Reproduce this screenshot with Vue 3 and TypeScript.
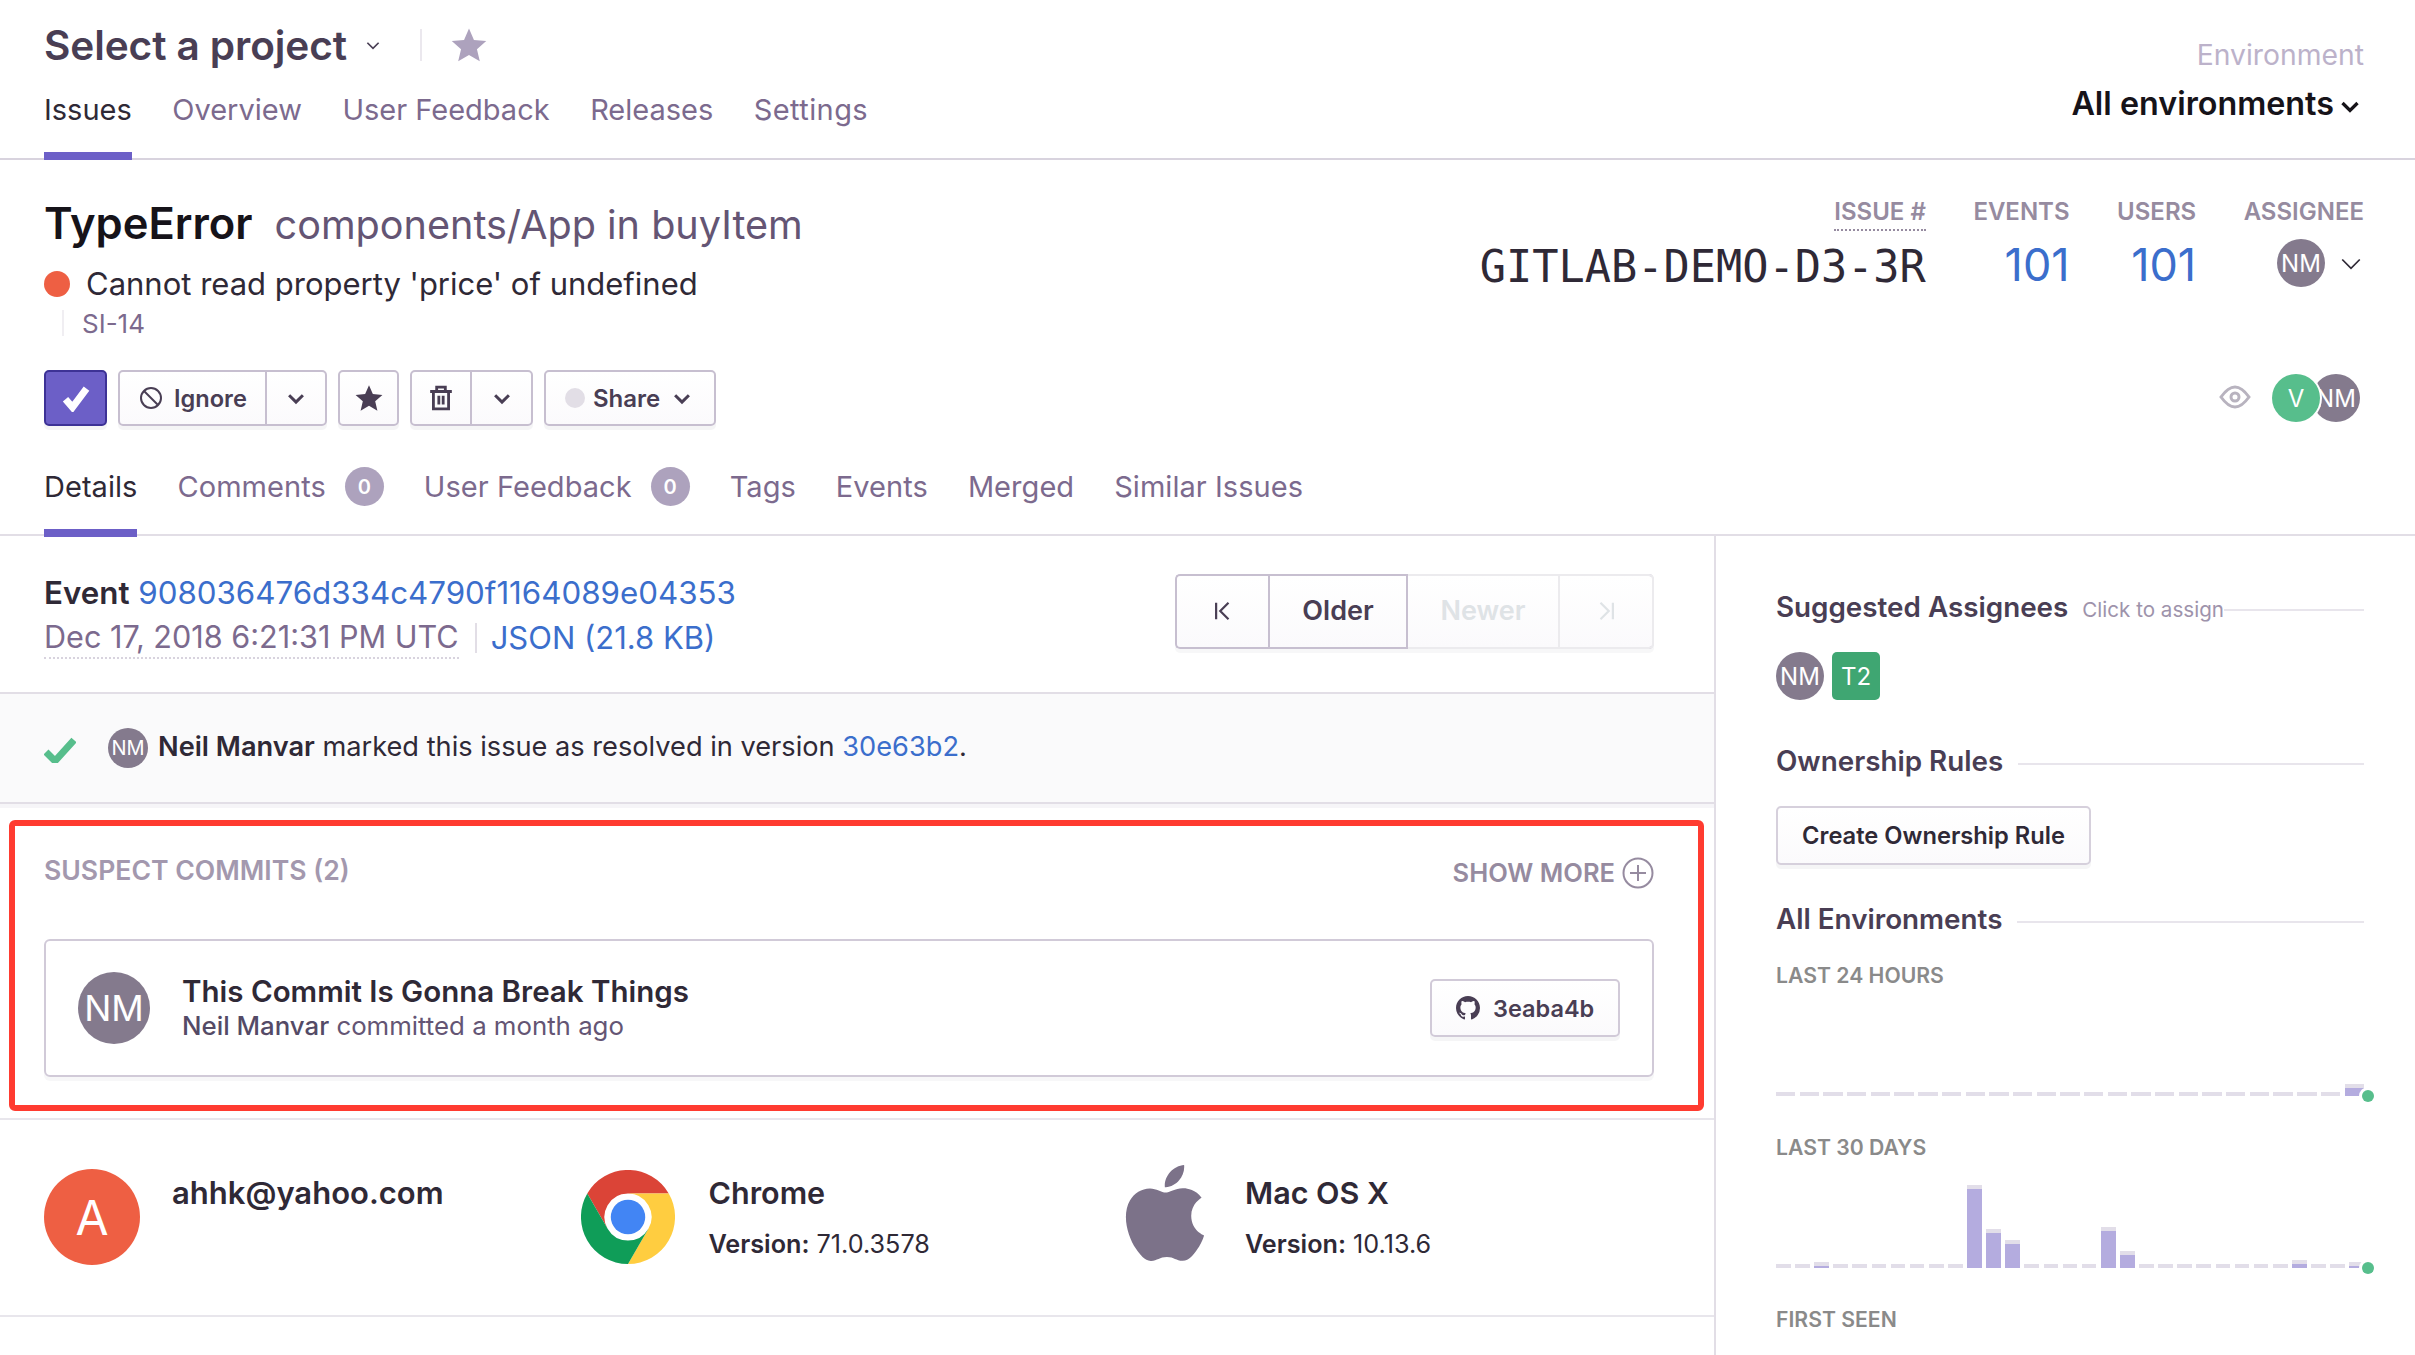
<script setup lang="ts">
const navTabs: string[] = ['Overview', 'User Feedback', 'Releases', 'Settings']
const stats = [
  { label: 'EVENTS', value: '101' },
  { label: 'USERS', value: '101' },
]
const bars24: number[] = [...Array(24).fill(4), 12]
const bars30: number[] = Array(31).fill(4)
const peaks: Record<number, number> = { 2: 6, 10: 83, 11: 39, 12: 28, 17: 41, 18: 17, 27: 8, 30: 6 }
Object.keys(peaks).forEach((k) => { bars30[Number(k)] = peaks[Number(k)] })
const chevron = 'M3 6l5 5 5-5'
</script>

<template>
  <div class="page">
    <header class="top">
      <div class="top-left">
        <div class="proj">
          <span class="proj-name">Select a project</span>
          <svg class="proj-chev" viewBox="0 0 16 16"><path :d="chevron" /></svg>
          <span class="proj-div"></span>
          <svg class="proj-star" viewBox="0 0 24 24"><path d="M12 1l3.3 7.6 8.2.8-6.2 5.4 1.9 8.1-7.2-4.3-7.2 4.3 1.9-8.1L.5 9.4l8.2-.8z" /></svg>
        </div>
        <nav class="nav">
          <a class="nav-tab active">Issues</a>
          <a v-for="t in navTabs" :key="t" class="nav-tab">{{ t }}</a>
        </nav>
      </div>
      <div class="env">
        <div class="env-label">Environment</div>
        <div class="env-value">All environments<svg class="env-chev" viewBox="0 0 16 16"><path :d="chevron" /></svg></div>
      </div>
    </header>

    <section class="issue">
      <div class="issue-top">
        <div class="issue-info">
          <div class="issue-title"><span class="err">TypeError</span><span class="loc">components/App in buyItem</span></div>
          <div class="issue-msg"><span class="dot"></span>Cannot read property 'price' of undefined</div>
          <div class="issue-short"><span>SI-14</span></div>
        </div>
        <div class="stats">
          <div class="stat">
            <div class="stat-label dotted">ISSUE #</div>
            <div class="short-id">GITLAB-DEMO-D3-3R</div>
          </div>
          <div v-for="s in stats" :key="s.label" class="stat">
            <div class="stat-label">{{ s.label }}</div>
            <div class="stat-num">{{ s.value }}</div>
          </div>
          <div class="stat">
            <div class="stat-label">ASSIGNEE</div>
            <div class="assignee">
              <span class="ava ava48">NM</span>
              <svg class="thin-chev" viewBox="0 0 16 16"><path :d="chevron" /></svg>
            </div>
          </div>
        </div>
      </div>

      <div class="actions">
        <div class="btn-row">
          <button class="btn primary"><svg viewBox="0 0 24 24" class="ic-check"><path d="M3 13l6 7L21 4" /></svg></button>
          <div class="btn group ignore">
            <span class="seg seg-ignore">
              <svg class="ic-ban" viewBox="0 0 24 24"><circle cx="12" cy="12" r="10" /><path d="M5 5l14 14" /></svg>Ignore
            </span>
            <span class="seg seg-chev"><svg class="btn-chev" viewBox="0 0 16 16"><path :d="chevron" /></svg></span>
          </div>
          <button class="btn star-btn"><svg viewBox="0 0 24 24" class="ic-star"><path d="M12 1l3.3 7.6 8.2.8-6.2 5.4 1.9 8.1-7.2-4.3-7.2 4.3 1.9-8.1L.5 9.4l8.2-.8z" /></svg></button>
          <div class="btn group del">
            <span class="seg seg-trash">
              <svg class="ic-trash" viewBox="0 0 24 24"><path d="M2 6h20M8 6V2h8v4M5 6v16h14V6M10 10v8M14 10v8" /></svg>
            </span>
            <span class="seg seg-chev"><svg class="btn-chev" viewBox="0 0 16 16"><path :d="chevron" /></svg></span>
          </div>
          <button class="btn share"><span class="share-dot"></span>Share<svg class="btn-chev" viewBox="0 0 16 16"><path :d="chevron" /></svg></button>
        </div>
        <div class="watch">
          <svg class="ic-eye" viewBox="0 0 32 24"><path d="M2 12C7 5 11 2 16 2s9 3 14 10c-5 7-9 10-14 10S7 19 2 12z" /><circle cx="16" cy="12" r="4" /></svg>
          <div class="stack">
            <span class="ava ava48 green">V</span>
            <span class="ava ava48 behind">NM</span>
          </div>
        </div>
      </div>

      <nav class="subnav">
        <a class="sub-tab active">Details</a>
        <a class="sub-tab">Comments<span class="badge">0</span></a>
        <a class="sub-tab">User Feedback<span class="badge">0</span></a>
        <a class="sub-tab">Tags</a>
        <a class="sub-tab">Events</a>
        <a class="sub-tab">Merged</a>
        <a class="sub-tab">Similar Issues</a>
      </nav>
    </section>

    <div class="body">
      <main class="main">
        <section class="event">
          <div>
            <div class="event-line"><b>Event</b> <a class="link">908036476d334c4790f1164089e04353</a></div>
            <div class="event-line second"><span class="date">Dec 17, 2018 6:21:31 PM UTC</span><span class="sep"></span><a class="link">JSON (21.8 KB)</a></div>
          </div>
          <div class="pager">
            <span class="pg pg-first"><svg viewBox="0 0 16 16" class="pg-ic"><path d="M3 2v12M12 2L6 8l6 6" /></svg></span>
            <span class="pg pg-older">Older</span>
            <span class="pg pg-newer off">Newer</span>
            <span class="pg pg-last off"><svg viewBox="0 0 16 16" class="pg-ic"><path d="M13 2v12M4 2l6 6-6 6" /></svg></span>
          </div>
        </section>

        <section class="activity">
          <svg class="res-check" viewBox="0 0 32 26"><path d="M2 15l9 9L30 3" /></svg>
          <span class="ava ava40">NM</span>
          <span class="act-text"><b>Neil Manvar</b> marked this issue as resolved in version <a class="link">30e63b2</a>.</span>
        </section>

        <section class="suspect">
          <div class="mark"></div>
          <div class="suspect-head">
            <span class="caps">SUSPECT COMMITS (2)</span>
            <span class="caps more">SHOW MORE<svg class="plus" viewBox="0 0 32 32"><circle cx="16" cy="16" r="14.5" /><path d="M16 8v16M8 16h16" /></svg></span>
          </div>
          <div class="commit">
            <span class="ava ava72">NM</span>
            <div class="commit-text">
              <div class="commit-title">This Commit Is Gonna Break Things</div>
              <div class="commit-sub"><b>Neil Manvar</b> committed a month ago</div>
            </div>
            <button class="btn sha">
              <svg class="ic-gh" viewBox="0 0 16 16"><path d="M8 0C3.58 0 0 3.58 0 8c0 3.54 2.29 6.53 5.47 7.59.4.07.55-.17.55-.38 0-.19-.01-.82-.01-1.49-2.01.37-2.53-.49-2.69-.94-.09-.23-.48-.94-.82-1.13-.28-.15-.68-.52-.01-.53.63-.01 1.08.58 1.23.82.72 1.21 1.87.87 2.33.66.07-.52.28-.87.51-1.07-1.78-.2-3.64-.89-3.64-3.95 0-.87.31-1.59.82-2.15-.08-.2-.36-1.02.08-2.12 0 0 .67-.21 2.2.82.64-.18 1.32-.27 2-.27.68 0 1.36.09 2 .27 1.53-1.04 2.2-.82 2.2-.82.44 1.1.16 1.92.08 2.12.51.56.82 1.27.82 2.15 0 3.07-1.87 3.75-3.65 3.95.29.25.54.73.54 1.48 0 1.07-.01 1.93-.01 2.2 0 .21.15.46.55.38A8.013 8.013 0 0016 8c0-4.42-3.58-8-8-8z" /></svg>3eaba4b
            </button>
          </div>
        </section>

        <section class="devices">
          <div class="device">
            <span class="ava ava96 red">A</span>
            <div class="dev-name">ahhk@yahoo.com</div>
          </div>
          <div class="device">
            <span class="dev-box">
              <svg class="chrome" viewBox="0 0 48 48">
                <path fill="#db4437" d="M3.2 12A24 24 0 0 1 44.8 12H24A12 12 0 0 0 13.6 30Z" />
                <path fill="#ffcd40" d="M44.8 12A24 24 0 0 1 24 48L34.4 30A12 12 0 0 0 24 12Z" />
                <path fill="#0f9d58" d="M24 48A24 24 0 0 1 3.2 12L13.6 30A12 12 0 0 0 34.4 30Z" />
                <circle cx="24" cy="24" r="11" fill="#fff" />
                <circle cx="24" cy="24" r="8.8" fill="#4285f4" />
              </svg>
            </span>
            <div><div class="dev-name">Chrome</div><div class="dev-ver"><b>Version:</b> 71.0.3578</div></div>
          </div>
          <div class="device">
            <span class="dev-box">
              <svg class="apple" viewBox="0 0 24 24"><path d="M12.152 6.896c-.948 0-2.415-1.078-3.96-1.04-2.04.027-3.91 1.183-4.961 3.014-2.117 3.675-.546 9.103 1.519 12.09 1.013 1.454 2.208 3.09 3.792 3.039 1.52-.065 2.09-.987 3.935-.987 1.831 0 2.35.987 3.96.948 1.637-.026 2.676-1.48 3.676-2.948 1.156-1.688 1.636-3.325 1.662-3.415-.039-.013-3.182-1.221-3.22-4.857-.026-3.04 2.48-4.494 2.597-4.559-1.429-2.09-3.623-2.324-4.39-2.376-2-.156-3.675 1.09-4.61 1.09zM15.53 3.83c.843-1.012 1.4-2.427 1.245-3.83-1.207.052-2.662.805-3.532 1.818-.78.896-1.454 2.338-1.273 3.714 1.338.104 2.715-.688 3.559-1.701" /></svg>
            </span>
            <div><div class="dev-name">Mac OS X</div><div class="dev-ver"><b>Version:</b> 10.13.6</div></div>
          </div>
        </section>
      </main>

      <aside class="side">
        <div class="side-head"><span class="side-title">Suggested Assignees</span><small class="hint">Click to assign</small><i class="rule tight"></i></div>
        <div class="suggest">
          <span class="ava ava48">NM</span>
          <span class="team">T2</span>
        </div>
        <div class="side-head own"><span class="side-title">Ownership Rules</span><i class="rule"></i></div>
        <button class="btn create">Create Ownership Rule</button>
        <div class="side-head envs"><span class="side-title">All Environments</span><i class="rule"></i></div>
        <div class="side-label first">LAST 24 HOURS</div>
        <div class="chart c24">
          <span v-for="(h, i) in bars24" :key="i" class="bar" :style="{ height: h + 'px' }"></span>
          <span class="pulse"></span>
        </div>
        <div class="side-label">LAST 30 DAYS</div>
        <div class="chart c30">
          <span v-for="(h, i) in bars30" :key="i" class="bar" :style="{ height: h + 'px' }"></span>
          <span class="pulse"></span>
        </div>
        <div class="side-label">FIRST SEEN</div>
      </aside>
    </div>
  </div>
</template>

<style scoped>
.page { width: 2415px; height: 1355px; overflow: hidden; background: #fff; color: #2f2936; font-family: Inter, "Noto Sans", sans-serif; position: relative; }
b { font-weight: 600; }
a { text-decoration: none; }
svg { display: block; flex: none; }
.link { color: #3b6ecc; }

.top { display: flex; justify-content: space-between; height: 160px; box-sizing: border-box; border-bottom: 2px solid #d8d3de; padding: 0 51px 0 44px; }
.proj { display: flex; align-items: center; height: 44px; margin-top: 23px; }
.proj-name { font-size: 40.6px; font-weight: 600; color: #493e54; letter-spacing: -.1px; }
.proj-chev { width: 18px; height: 18px; margin-left: 17px; fill: none; stroke: #493e54; stroke-width: 1.5; }
.proj-div { width: 2px; height: 32px; background: #ebe8ee; margin-left: 38px; }
.proj-star { width: 36px; height: 36px; margin-left: 29px; fill: #ada2bd; }
.nav { display: flex; gap: 40.5px; margin-top: 22px; }
.nav-tab { font-size: 29px; line-height: 42px; height: 71px; color: #7c6a8e; box-sizing: border-box; border-bottom: 8px solid transparent; }
.nav-tab:last-child { letter-spacing: .4px; }
.nav-tab.active { color: #2f2936; border-color: #6c5fc7; }

.env { display: flex; flex-direction: column; align-items: flex-end; padding-top: 37px; }
.env-label { font-size: 28.3px; line-height: 36px; color: #bcb2ca; }
.env-value { display: flex; align-items: center; font-size: 32.3px; line-height: 42px; font-weight: 600; color: #161319; margin-top: 10px; }
.env-chev { width: 24px; height: 24px; margin: 4px 2px 0 4px; fill: none; stroke: #161319; stroke-width: 2.2; }

.issue { height: 376px; box-sizing: border-box; border-bottom: 2px solid #e2dee6; padding: 0 51px 0 44px; }
.issue-top { display: flex; justify-content: space-between; height: 190px; }
.issue-info { padding-top: 39px; }
.issue-title { display: flex; align-items: baseline; line-height: 48px; }
.err { font-size: 43.5px; font-weight: 600; color: #161319; }
.loc { font-size: 39.6px; color: #645574; margin-left: 22px; }
.issue-msg { display: flex; align-items: center; gap: 16px; font-size: 31px; line-height: 40px; color: #2f2936; margin-top: 15px; }
.dot { width: 26px; height: 26px; border-radius: 50%; background: #ee5f43; }
.issue-short { border-left: 2px solid #f0eef2; margin: 6px 0 0 18px; padding-left: 18px; height: 26px; display: flex; align-items: center; font-size: 26px; color: #7c6a8e; }

.stats { display: flex; gap: 47.5px; padding-top: 35px; }
.stat { display: flex; flex-direction: column; align-items: flex-end; }
.stat-label { font-size: 24px; line-height: 34px; font-weight: 600; color: #968ba0; height: 34px; }
.dotted { border-bottom: 2px dotted #968ba0; }
.short-id { font-family: "DejaVu Sans Mono", monospace; font-size: 43.6px; line-height: 56px; margin-top: 8px; color: #2f2936; }
.stat-num { font-size: 45px; line-height: 56px; margin-top: 8px; color: #3b6ecc; }
.assignee { display: flex; align-items: center; gap: 12px; margin-top: 10px; }
.thin-chev { width: 28px; height: 28px; fill: none; stroke: #2f2936; stroke-width: 1; margin-right: -1px; }

.ava { display: inline-flex; align-items: center; justify-content: center; border-radius: 50%; background: #847a8d; color: #fff; flex: none; }
.ava48 { width: 48px; height: 48px; font-size: 24px; }
.ava40 { width: 40px; height: 40px; font-size: 20px; }
.ava72 { width: 72px; height: 72px; font-size: 36px; }
.ava96 { width: 96px; height: 96px; font-size: 48px; }
.red { background: #ee5f43; }
.green { background: #57be8c; }

.actions { display: flex; justify-content: space-between; align-items: flex-start; margin-top: 20px; height: 60px; }
.btn-row { display: flex; gap: 11px; }
.btn { display: inline-flex; align-items: center; box-sizing: border-box; height: 56px; padding: 0; background: linear-gradient(#fff, #fbfafc); border: 2px solid #c7bfd0; border-radius: 5px; box-shadow: 0 4px 0 rgba(60, 50, 80, .05); color: #493e54; font-family: inherit; font-size: 24px; font-weight: 600; }
.primary { width: 63px; justify-content: center; background: #6c5fc7; border-color: #3d3296; }
.ic-check { width: 28px; height: 28px; fill: none; stroke: #fff; stroke-width: 6; }
.seg { display: flex; align-items: center; height: 100%; box-sizing: border-box; }
.seg-ignore { width: 147px; padding-left: 19px; gap: 11px; border-right: 2px solid #c7bfd0; font-size: 23.6px; }
.seg-chev { flex: 1; justify-content: center; }
.ignore { width: 209px; }
.ic-ban { width: 24px; height: 24px; fill: none; stroke: #493e54; stroke-width: 2; }
.btn-chev { width: 22px; height: 22px; fill: none; stroke: #493e54; stroke-width: 2.2; }
.star-btn { width: 61px; justify-content: center; }
.ic-star { width: 28px; height: 28px; fill: #493e54; }
.del { width: 123px; }
.seg-trash { width: 60px; justify-content: center; border-right: 2px solid #c7bfd0; }
.ic-trash { width: 26px; height: 26px; fill: none; stroke: #493e54; stroke-width: 2.6; }
.share { width: 172px; padding-left: 19px; }
.share-dot { width: 20px; height: 20px; border-radius: 50%; background: #e2dee6; margin-right: 8px; }
.share .btn-chev { margin-left: 11px; }

.watch { display: flex; align-items: center; gap: 21px; margin-top: 4px; margin-right: 4px; }
.ic-eye { width: 32px; height: 24px; fill: none; stroke: #b8b3bf; stroke-width: 3; margin-top: -3px; }
.stack { display: flex; }
.stack .green { position: relative; z-index: 1; box-shadow: 0 0 0 2px #fff; }
.behind { margin-left: -8px; }

.subnav { display: flex; gap: 40px; margin-top: 37px; height: 70px; }
.sub-tab { display: flex; align-items: flex-start; gap: 19px; height: 70px; box-sizing: border-box; font-size: 29px; line-height: 40px; letter-spacing: .05px; color: #7c6a8e; border-bottom: 8px solid transparent; }
.sub-tab.active { color: #2f2936; border-color: #6c5fc7; }
.badge { width: 39px; height: 39px; border-radius: 50%; background: #ada2bd; color: #fff; font-size: 20px; font-weight: 600; display: flex; align-items: center; justify-content: center; }

.body { display: flex; height: 819px; }
.main { width: 1716px; box-sizing: border-box; border-right: 2px solid #e2dee6; flex: none; }
.event { display: flex; justify-content: space-between; height: 158px; box-sizing: border-box; padding: 37px 60px 0 44px; border-bottom: 2px solid #e2dee6; }
.event-line { font-size: 31.3px; line-height: 40px; color: #2f2936; }
.second { display: flex; align-items: center; margin-top: 4px; font-size: 31px; }
.date { color: #7c6a8e; border-bottom: 2px dotted #d8d3de; line-height: 40px; font-size: 30.6px; }
.sep { width: 2px; height: 30px; background: #e2dee6; margin: 0 14px 0 16px; }

.pager { display: flex; height: 75px; box-sizing: border-box; border: 2px solid #c7bfd0; border-right-color: #ecebee; border-radius: 5px; background: linear-gradient(#fff, #fbfafc); box-shadow: 0 4px 0 rgba(60, 50, 80, .04); margin-top: 1px; position: relative; }
.pg { display: flex; align-items: center; justify-content: center; font-size: 27px; font-weight: 600; color: #493e54; box-sizing: border-box; padding-bottom: 2px; }
.pg-first { width: 93px; border-right: 2px solid #c7bfd0; }
.pg-older { width: 138px; border-right: 2px solid #c7bfd0; }
.pg-newer { width: 152px; border-right: 2px solid #ecebee; }
.pg-last { width: 92px; }
.off { color: #dfe3e6; }
.pg-ic { width: 22px; height: 22px; fill: none; stroke: #493e54; stroke-width: 1.6; }
.off .pg-ic { stroke: #dfe3e6; }
.pager::after { content: ""; position: absolute; left: 231px; right: -2px; top: -2px; bottom: -2px; border: 2px solid #ecebee; border-left: 0; border-radius: 0 5px 5px 0; }

.activity { display: flex; align-items: center; height: 110px; box-sizing: border-box; background: #fafafb; border-bottom: 2px solid #e2dee6; box-shadow: 0 4px 0 #f6f5f8; padding-left: 44px; position: relative; }
.res-check { width: 32px; height: 26px; fill: none; stroke: #57be8c; stroke-width: 7; margin-top: 4px; }
.activity .ava { margin-left: 32px; }
.act-text { font-size: 27.2px; margin-left: 10px; margin-top: -4px; color: #2f2936; }

.suspect { height: 316px; box-sizing: border-box; border-bottom: 2px solid #e8e6ec; padding: 48px 60px 0 44px; position: relative; }
.mark { position: absolute; left: 9px; top: 16px; width: 1695px; height: 291px; box-sizing: border-box; border: 6px solid #ff3b30; border-radius: 6px; pointer-events: none; }
.suspect-head { display: flex; justify-content: space-between; align-items: center; height: 36px; }
.caps { font-size: 26.6px; font-weight: 600; color: #a398ae; }
.more { display: flex; align-items: center; gap: 7px; color: #968ba0; font-size: 25.5px; padding-top: 4px; }
.plus { width: 32px; height: 32px; fill: none; stroke: #968ba0; stroke-width: 2; margin-top: 2px; }
.commit { display: flex; align-items: center; height: 138px; box-sizing: border-box; border: 2px solid #d1cad8; border-radius: 6px; box-shadow: 0 4px 0 rgba(60, 50, 80, .04); margin-top: 51px; padding: 0 32px; }
.commit-text { margin-left: 32px; flex: 1; }
.commit-title { font-size: 29.5px; line-height: 40px; font-weight: 600; color: #2f2936; margin-top: -4px; }
.commit-sub { font-size: 25.8px; line-height: 32px; margin-top: -1px; color: #645574; }
.commit-sub b { color: #544a66; font-weight: 500; }
.sha { width: 190px; height: 58px; padding-left: 24px; border-color: #d1cad8; font-size: 23.5px; gap: 13px; }
.ic-gh { width: 24px; height: 24px; fill: #493e54; }

.devices { display: grid; grid-template-columns: repeat(3, 536.5px); height: 197px; box-sizing: border-box; border-bottom: 2px solid #e8e6ec; padding: 49px 0 0 44px; }
.device { display: flex; gap: 32px; align-items: flex-start; }
.dev-box { width: 96px; height: 96px; display: flex; justify-content: center; flex: none; }
.chrome { width: 94px; height: 94px; margin: 1px 0 0 -2px; }
.apple { width: 96px; height: 96px; fill: #7c7289; margin-top: -4px; }
.dev-name { font-size: 31px; line-height: 50px; font-weight: 600; color: #2f2936; margin-top: -1px; }
.device:nth-child(2) .dev-name, .device:nth-child(3) .dev-name { font-size: 30.5px; }
.dev-ver { font-size: 25.2px; line-height: 42px; margin-top: 5px; color: #2f2936; }

.side { flex: 1; box-sizing: border-box; padding: 51px 51px 0 60px; }
.side-head { display: flex; align-items: center; height: 40px; }
.side-title { font-size: 27.8px; font-weight: 600; color: #493e54; white-space: nowrap; }
.hint { font-size: 20.6px; color: #9e93ab; margin-left: 14px; margin-top: 4px; white-space: nowrap; }
.rule { flex: 1; height: 2px; background: #e8e5ec; margin-left: 15px; margin-top: 6px; display: block; }
.rule.tight { margin-left: 0; }
.suggest { display: flex; gap: 8px; margin-top: 25px; }
.team { width: 48px; height: 48px; border-radius: 5px; background: #3fa672; color: #fff; font-size: 24px; display: flex; align-items: center; justify-content: center; }
.own { margin-top: 41px; }
.create { display: flex; width: 315px; height: 59px; justify-content: center; margin-top: 25px; border-color: #d6d0dc; font-size: 23.7px; color: #2f2936; padding-bottom: 1px; }
.envs { margin-top: 34px; }
.side-label { font-size: 21.2px; line-height: 30px; font-weight: 600; color: #8a8a8a; margin-top: 36px; }
.side-label.first { margin-top: 21px; }
.chart { display: flex; align-items: flex-end; position: relative; }
.c24 { height: 60px; margin-top: 46px; gap: 4.3px; }
.c30 { height: 90px; margin-top: 16px; gap: 4.4px; }
.bar { flex: 1; box-sizing: border-box; background: #b4acdf; border-top: 4px solid #e2dee9; }
.pulse { position: absolute; right: -10px; bottom: -6px; width: 12px; height: 12px; border-radius: 50%; background: #57be8c; box-shadow: 0 0 0 3px #fff; }
</style>

<style>
html, body { margin: 0; background: #fff; }
</style>
